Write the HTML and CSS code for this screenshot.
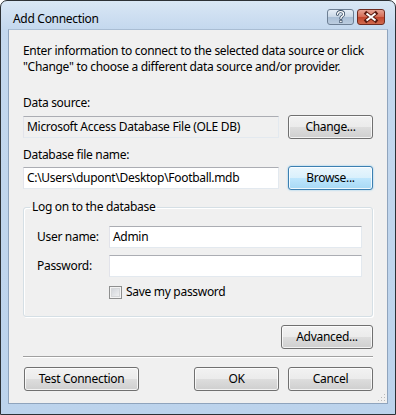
FILE: index.html
```html
<!DOCTYPE html>
<html>
<head>
<meta charset="utf-8">
<link rel="stylesheet" href="styles.css">
</head>
<body>
<div class="window">
  <div class="titlebar">
    <span class="title">Add Connection</span>
    <div class="caption-btns">
      <span class="cap help"><svg width="27" height="16" viewBox="0 0 27 16"><path d="M10.5 5.2 Q11 2.6 13.6 2.6 Q16.6 2.6 16.6 5.2 Q16.6 6.8 14.8 7.6 Q13.9 8.1 13.9 9.6" fill="none" stroke="#3b4f66" stroke-width="3" stroke-linecap="round"/><path d="M10.5 5.2 Q11 2.6 13.6 2.6 Q16.6 2.6 16.6 5.2 Q16.6 6.8 14.8 7.6 Q13.9 8.1 13.9 9.6" fill="none" stroke="#fff" stroke-width="1.4" stroke-linecap="round"/><rect x="12.4" y="11" width="3" height="3" fill="#3b4f66"/><rect x="13.1" y="11.7" width="1.6" height="1.6" fill="#fff"/></svg></span>
      <span class="cap close"><svg width="28" height="16" viewBox="0 0 28 16"><path d="M9.5 4.5 L18.5 11.5 M18.5 4.5 L9.5 11.5" stroke="#5a1a10" stroke-width="4" stroke-linecap="square"/><path d="M9.5 4.5 L18.5 11.5 M18.5 4.5 L9.5 11.5" stroke="#fff" stroke-width="2"/></svg></span>
    </div>
  </div>
  <div class="client">
    <p class="intro">Enter information to connect to the selected data source or click "Change" to choose a different data source and/or provider.</p>
    <div class="label first">Data source:</div>
    <div class="field-row">
      <div class="textbox readonly">Microsoft Access Database File (OLE DB)</div>
      <span class="btn">Change...</span>
    </div>
    <div class="label second">Database file name:</div>
    <div class="field-row tight">
      <div class="textbox">C:\Users\dupont\Desktop\Football.mdb</div>
      <span class="btn focus">Browse...</span>
    </div>
    <fieldset class="group">
      <legend>Log on to the database</legend>
      <div class="form-grid">
        <span class="flabel">User name:</span>
        <div class="textbox">Admin</div>
        <span class="flabel">Password:</span>
        <div class="textbox"></div>
        <span></span>
        <label class="check"><span class="box"></span>Save my password</label>
      </div>
    </fieldset>
    <div class="adv-row"><span class="btn adv">Advanced...</span></div>
    <div class="separator"></div>
    <div class="bottom-row">
      <span class="btn test">Test Connection</span>
      <div class="ok-cancel">
        <span class="btn">OK</span>
        <span class="btn">Cancel</span>
      </div>
    </div>
    <svg class="grip" width="9" height="9" viewBox="0 0 9 9"><g fill="#b9b9b9"><rect x="7" y="1" width="1" height="1"/><rect x="4" y="4" width="1" height="1"/><rect x="7" y="4" width="1" height="1"/><rect x="1" y="7" width="1" height="1"/><rect x="4" y="7" width="1" height="1"/><rect x="7" y="7" width="1" height="1"/></g></svg>
  </div>
</div>
</body>
</html>
```

FILE: styles.css
```css
* { box-sizing: border-box; }
html, body { margin: 0; padding: 0; background: #fff; }
body {
  font-family: "Noto Sans", "Open Sans", sans-serif;
  font-size: 12px;
  letter-spacing: -0.3px;
  color: #000;
  line-height: 16px;
}
.window {
  width: 396px;
  height: 415px;
  border: 1px solid #2c3136;
  border-radius: 7px 7px 0 0;
  background: linear-gradient(180deg, #d9e7f5 0px, #c4d8ee 28px, #bcd3ec 100%);
  display: flex;
  flex-direction: column;
  padding: 0 7px 10px 7px;
}
.titlebar {
  height: 28px;
  flex: none;
  display: flex;
  align-items: flex-start;
  justify-content: space-between;
}
.title {
  margin: 10px 0 0 5px;
  font-size: 12px;
  color: #000;
}
.caption-btns {
  display: flex;
  gap: 3px;
  margin: 8px 3px 0 0;
}
.cap {
  display: block;
  height: 16px;
  border-radius: 3px;
  border: 1px solid #6d7f94;
  overflow: hidden;
}
.cap svg { display: block; margin: -1px; }
.help {
  width: 27px;
  background: linear-gradient(180deg, #e6eef7 0%, #c9d7e6 50%, #a9bed5 51%, #bccde0 100%);
}
.close {
  width: 28px;
  border-color: #6e2b20;
  background: linear-gradient(180deg, #e6a293 0%, #d46b55 50%, #c2442c 51%, #d06a4e 100%);
}
.client {
  position: relative;
  flex: 1;
  background: #f0f0f0;
  border: 1px solid #8fa4bd;
  border-top-color: #a9bdd3;
  padding: 13px 14px 0 14px;
  display: flex;
  flex-direction: column;
}
.intro { margin: 0; }
.label.first { margin-top: 20px; }
.label.second { margin-top: 8px; }
.field-row {
  margin-top: 4px;
  display: flex;
  align-items: center;
  gap: 9px;
  height: 24px;
}
.field-row.tight { margin-top: 3px; }
.textbox {
  height: 22px;
  background: #fff;
  border: 1px solid #dbdfe6;
  border-top-color: #abadb3;
  border-left-color: #e2e3ea;
  border-right-color: #e3e9ef;
  border-bottom-color: #e3e9ef;
  padding: 2px 3px;
  white-space: nowrap;
  overflow: hidden;
}
.field-row .textbox { flex: 1; }
.textbox.readonly { background: #f0f0f0; }
.btn {
  display: flex;
  align-items: center;
  justify-content: center;
  width: 85px;
  height: 24px;
  flex: none;
  border: 1px solid #707070;
  border-radius: 3px;
  background: linear-gradient(180deg, #f2f2f2 0%, #ebebeb 50%, #dddddd 51%, #cfcfcf 100%);
  box-shadow: inset 0 0 0 1px rgba(255,255,255,0.75);
  color: #000;
}
.btn.focus {
  border-color: #3c7fb1;
  background: linear-gradient(180deg, #eaf6fd 0%, #d9f0fc 50%, #bee6fd 51%, #a7d9f5 100%);
  box-shadow: inset 0 0 0 1px rgba(255,255,255,0.8), 0 0 2px #7cc4ee;
}
.group {
  margin: 9px 0 0 0;
  padding: 0 10px 16px 13px;
  border: 1px solid #d5dfe5;
  border-radius: 3px;
  box-shadow: inset 1px 1px 0 #fff, 1px 1px 0 #fff;
  min-width: 0;
}
.group legend {
  padding: 0 2px;
  margin-left: -7px;
  line-height: 16px;
}
.form-grid {
  margin-top: 11px;
  display: grid;
  grid-template-columns: 72px 1fr;
  row-gap: 7px;
  align-items: center;
}
.check {
  display: flex;
  align-items: center;
  gap: 4px;
  height: 16px;
}
.box {
  width: 13px;
  height: 13px;
  border: 1px solid #8e8f8f;
  background: linear-gradient(135deg, #cbcfd5 0%, #f6f6f6 100%);
  box-shadow: inset 0 0 0 1px #f4f4f4, inset 0 0 0 2px #d6d8da;
}
.adv-row {
  margin-top: 8px;
  display: flex;
  justify-content: flex-end;
}
.btn.adv { width: 92px; }
.separator {
  margin-top: 7px;
  height: 2px;
  border-top: 1px solid #a0a0a0;
  border-bottom: 1px solid #fff;
}
.bottom-row {
  margin-top: 9px;
  display: flex;
  justify-content: space-between;
  padding-left: 1px;
}
.btn.test { width: 115px; }
.ok-cancel { display: flex; gap: 9px; }
.grip {
  position: absolute;
  right: 1px;
  bottom: 1px;
}
```
